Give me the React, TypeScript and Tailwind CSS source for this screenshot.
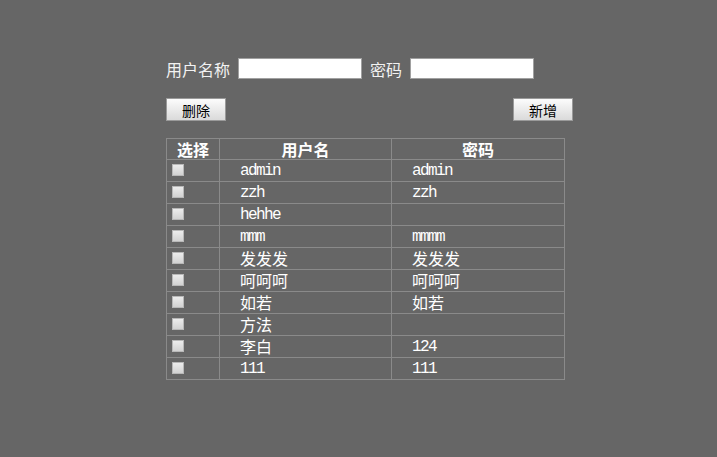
import React from 'react';

type User = { name: string; pwd: string };

const users: User[] = [
  { name: 'admin', pwd: 'admin' },
  { name: 'zzh', pwd: 'zzh' },
  { name: 'hehhe', pwd: '' },
  { name: 'mmm', pwd: 'mmmm' },
  { name: '发发发', pwd: '发发发' },
  { name: '呵呵呵', pwd: '呵呵呵' },
  { name: '如若', pwd: '如若' },
  { name: '方法', pwd: '' },
  { name: '李白', pwd: '124' },
  { name: '111', pwd: '111' },
];

const isAscii = (s: string) => /^[\x00-\x7f]*$/.test(s);

// latin text in the reference is half width (8px at 16px), so squeeze the mono font
const cellText = (s: string) =>
  isAscii(s)
    ? 'block h-[21px] pl-[20px] text-[16px] leading-[22px] tracking-[-1.6px] font-["Liberation_Mono","Noto_Sans_CJK_SC",monospace]'
    : 'block h-[21px] pl-[20px] text-[16px] leading-[21px] font-["Noto_Sans_CJK_SC",sans-serif]';

export default function App() {
  return (
    <div className='h-[457px] w-full bg-[#666666] pl-[166px] pt-[58px] font-["Noto_Sans_CJK_SC",sans-serif] text-white'>
      {/* search form */}
      <div className="flex h-[21px] items-center">
        <span className="mr-[8px] text-[16px] leading-none text-[#f2f2f2]">用户名称</span>
        <input className="h-[21px] w-[124px] border border-[#a0a0a0] bg-white outline-none" />
        <span className="ml-[8px] mr-[8px] text-[16px] leading-none text-[#f2f2f2]">密码</span>
        <input className="h-[21px] w-[124px] border border-[#a0a0a0] bg-white outline-none" />
      </div>

      {/* actions */}
      <div className="mt-[19px] flex w-[407px] justify-between">
        <button className="h-[23px] w-[60px] border border-[#9a9a9a] bg-gradient-to-b from-[#fcfcfc] to-[#dadada] text-[14px] leading-none text-black">
          删除
        </button>
        <button className="h-[23px] w-[60px] border border-[#9a9a9a] bg-gradient-to-b from-[#fcfcfc] to-[#dadada] text-[14px] leading-none text-black">
          新增
        </button>
      </div>

      {/* user list */}
      <table className="mt-[17px] w-[398px] table-fixed border-collapse border border-[#8a8a8a]">
        <colgroup>
          <col className="w-[53px]" />
          <col className="w-[172px]" />
          <col className="w-[173px]" />
        </colgroup>
        <thead>
          <tr>
            <th className="border border-[#8a8a8a] p-0 text-center">
              <div className="h-[20px] text-[16px] font-bold leading-[20px]">选择</div>
            </th>
            <th className="border border-[#8a8a8a] p-0 text-center">
              <div className="h-[20px] text-[16px] font-bold leading-[20px]">用户名</div>
            </th>
            <th className="border border-[#8a8a8a] p-0 text-center">
              <div className="h-[20px] text-[16px] font-bold leading-[20px]">密码</div>
            </th>
          </tr>
        </thead>
        <tbody>
          {users.map((u, i) => (
            <tr key={i}>
              <td className="border border-[#8a8a8a] p-0 align-top">
                <div className="h-[21px] pl-[5px] pt-[4px]">
                  <div className="h-[12px] w-[12px] border border-[#b8b8b8] bg-gradient-to-b from-[#ececec] to-[#d2d2d2]" />
                </div>
              </td>
              <td className="border border-[#8a8a8a] p-0">
                <span className={cellText(u.name)}>{u.name}</span>
              </td>
              <td className="border border-[#8a8a8a] p-0">
                <span className={cellText(u.pwd)}>{u.pwd}</span>
              </td>
            </tr>
          ))}
        </tbody>
      </table>
    </div>
  );
}
